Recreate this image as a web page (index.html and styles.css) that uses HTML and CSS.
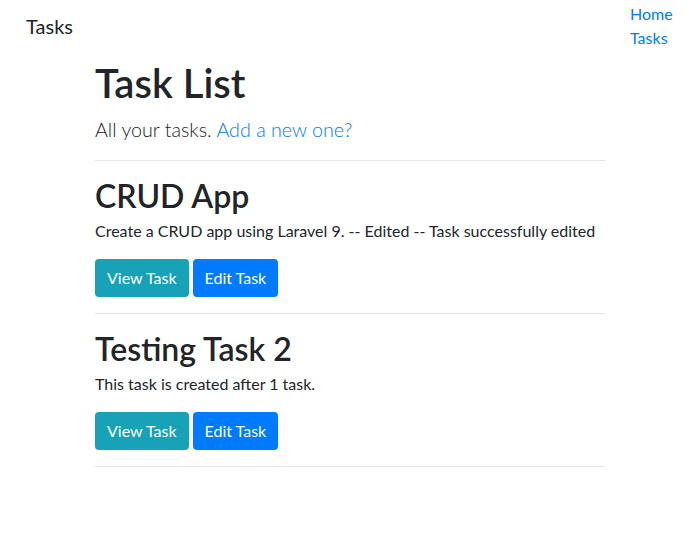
FILE: index.html
```html
<!DOCTYPE html>
<html lang="en">
<head>
<meta charset="utf-8">
<title>Tasks</title>
<link rel="stylesheet" href="styles.css">
</head>
<body>
<nav class="navbar">
  <a class="brand" href="#">Tasks</a>
  <ul class="nav">
    <li><a href="#">Home</a></li>
    <li><a href="#">Tasks</a></li>
  </ul>
</nav>
<main class="container">
  <h1 class="title">Task List</h1>
  <p class="lead">All your tasks. <a href="#">Add a new one?</a></p>
  <hr class="rule">
  <section class="task">
    <h2 class="task-title">CRUD App</h2>
    <p class="task-desc">Create a CRUD app using Laravel 9. -- Edited -- Task successfully edited</p>
    <div class="actions">
      <a class="btn btn-info" href="#">View Task</a>
      <a class="btn btn-primary" href="#">Edit Task</a>
    </div>
  </section>
  <hr class="rule">
  <section class="task">
    <h2 class="task-title">Testing Task 2</h2>
    <p class="task-desc">This task is created after 1 task.</p>
    <div class="actions">
      <a class="btn btn-info" href="#">View Task</a>
      <a class="btn btn-primary" href="#">Edit Task</a>
    </div>
  </section>
  <hr class="rule">
</main>
</body>
</html>
```
FILE: styles.css
```css
* { box-sizing: border-box; }
html, body {
  margin: 0;
  padding: 0;
  background: #fff;
}
body {
  font-family: Lato, "Open Sans", sans-serif;
  font-size: 16px;
  line-height: 1.5;
  color: #212529;
}
a { color: #007bff; text-decoration: none; }

.navbar {
  display: flex;
  align-items: center;
  justify-content: space-between;
  padding: 2px 0;
}
.brand {
  color: #212529;
  font-size: 20px;
  line-height: 30px;
  margin-left: 26px;
}
.nav {
  list-style: none;
  margin: 0;
  padding: 0;
  width: 67px;
}
.nav li { line-height: 24px; }

.container {
  width: 510px;
  margin: 7px auto 0 95px;
}
.title {
  font-size: 40px;
  font-weight: 600;
  line-height: 48px;
  margin: 0 0 8px;
}
.lead {
  font-size: 19.7px;
  font-weight: 300;
  line-height: 30px;
  margin: 0 0 15px;
}
.rule {
  border: 0;
  border-top: 1px solid rgba(0,0,0,.1);
  margin: 0;
}
.task { padding: 16px 0; }
.task-title {
  font-size: 32px;
  font-weight: 600;
  line-height: 38px;
  margin: 0 0 4px;
}
.task-desc {
  margin: 0 0 16px;
}
.actions {
  display: flex;
  gap: 4px;
}
.btn {
  display: inline-block;
  color: #fff;
  font-size: 16px;
  line-height: 24px;
  padding: 7px 12px;
  border-radius: 4px;
}
.btn-info { background: #17a2b8; }
.btn-primary { background: #007bff; }
```
